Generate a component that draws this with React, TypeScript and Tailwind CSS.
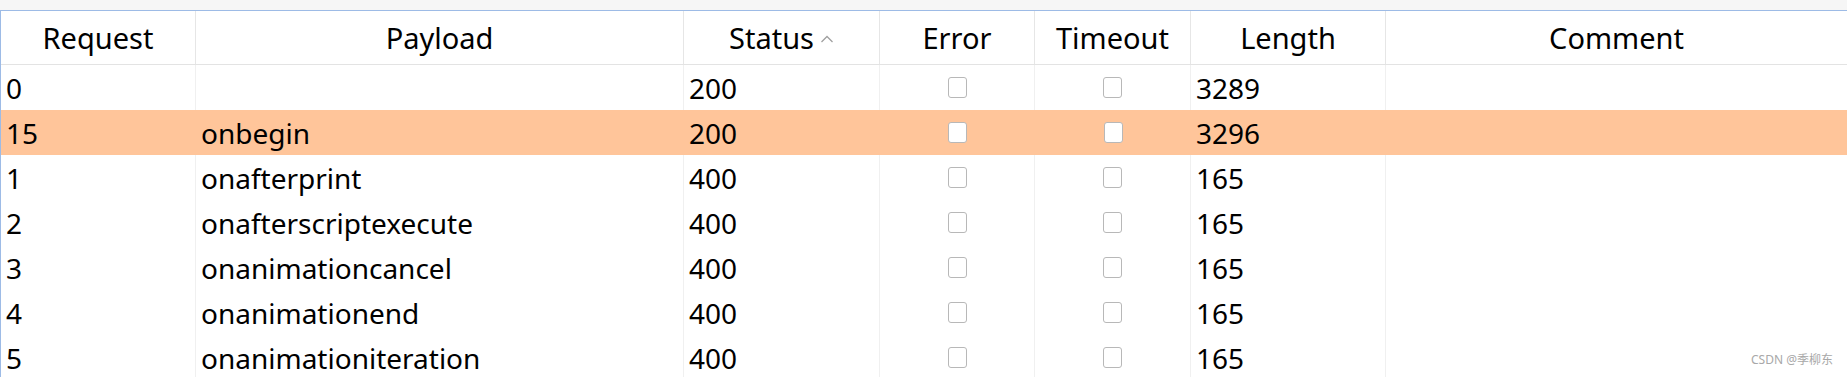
import React from "react";

const cols = "grid grid-cols-[195px_488px_196px_155px_156px_195px_1fr]";

type Row = { req: string; payload: string; status: string; length: string; hl?: boolean };

const rows: Row[] = [
  { req: "0", payload: "", status: "200", length: "3289" },
  { req: "15", payload: "onbegin", status: "200", length: "3296", hl: true },
  { req: "1", payload: "onafterprint", status: "400", length: "165" },
  { req: "2", payload: "onafterscriptexecute", status: "400", length: "165" },
  { req: "3", payload: "onanimationcancel", status: "400", length: "165" },
  { req: "4", payload: "onanimationend", status: "400", length: "165" },
  { req: "5", payload: "onanimationiteration", status: "400", length: "165" },
];

function Box() {
  return <div className="w-[19px] h-[21px] rounded-[3px] border-[1.5px] border-[#b8b8b8] bg-white" />;
}

export default function App() {
  const sep = (hl?: boolean) => (hl ? "" : "border-r border-[#f0f0f0]");
  return (
    <div
      className="relative w-[1847px] h-[377px] overflow-hidden bg-white text-black"
      style={{ fontFamily: '"Noto Sans", "Open Sans", "Noto Sans CJK SC", sans-serif' }}
    >
      <div className="h-[10px] bg-[#f6f6f6]" />
      <div className="border-t border-l border-[#9dbbe6]">
        <div className={`${cols} h-[54px] border-b border-[#e3e3e3] text-[29px]`}>
          <div className="flex items-center justify-center border-r border-[#e6e6e6]">Request</div>
          <div className="flex items-center justify-center border-r border-[#e6e6e6]">Payload</div>
          <div className="flex items-center justify-center border-r border-[#e6e6e6]">
            <span>Status</span>
            <svg width="14" height="10" viewBox="0 0 14 10" className="ml-[6px] mt-[2px]">
              <path d="M1.5 8 L7 2.5 L12.5 8" fill="none" stroke="#a0a0a0" strokeWidth="1.3" />
            </svg>
          </div>
          <div className="flex items-center justify-center border-r border-[#e6e6e6]">Error</div>
          <div className="flex items-center justify-center border-r border-[#e6e6e6]">Timeout</div>
          <div className="flex items-center justify-center border-r border-[#e6e6e6]">Length</div>
          <div className="flex items-center justify-center">Comment</div>
        </div>
        {rows.map((r) => (
          <div
            key={r.req}
            className={`${cols} h-[45px] text-[28px] ${r.hl ? "bg-[#ffc59a]" : "bg-white"}`}
          >
            <div className={`flex items-center pl-[5px] ${sep(r.hl)}`}>{r.req}</div>
            <div className={`flex items-center pl-[5px] ${sep(r.hl)}`}>{r.payload}</div>
            <div className={`flex items-center pl-[5px] ${sep(r.hl)}`}>{r.status}</div>
            <div className={`flex items-center justify-center ${sep(r.hl)}`}>
              <Box />
            </div>
            <div className={`flex items-center justify-center ${sep(r.hl)}`}>
              <Box />
            </div>
            <div className={`flex items-center pl-[5px] ${sep(r.hl)}`}>{r.length}</div>
            <div />
          </div>
        ))}
      </div>
      <div className="absolute right-[14px] bottom-[11px] text-[12px] text-[#a8a8a8] leading-none">
        CSDN @季柳东
      </div>
    </div>
  );
}
